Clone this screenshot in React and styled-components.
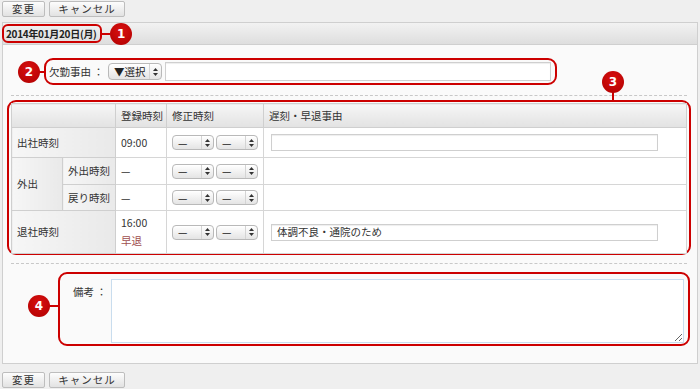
import React from "react";
import styled, { createGlobalStyle } from "styled-components";

const GlobalStyle = createGlobalStyle`
    body {
        margin: 0;
        background: #efefef;
        font-family: "Noto Sans CJK JP", "Liberation Sans", sans-serif;
        font-size: 10.5px;
        line-height: 14px;
        color: #333;
    }
`;

const Page = styled.div`
    width: 700px;
    height: 389px;
    overflow: hidden;
    white-space: nowrap;
`;

const ButtonBar = styled.div`
    display: flex;
    gap: 4px;
    padding: ${(p) => (p.bottom ? "8px 2px 0" : "1px 2px 0")};
`;

const Button = styled.button`
    width: ${(p) => p.w}px;
    height: 16px;
    padding: 0;
    border: 1px solid #bdbdbd;
    border-radius: 2px;
    background: linear-gradient(#fdfdfd, #e2e2e2);
    font-family: inherit;
    font-size: 10.5px;
    line-height: 14px;
    color: #333;
    letter-spacing: 1px;
`;

const Panel = styled.div`
    margin: 5px 2px 0;
    border: 1px solid #cfcfcf;
    background: #fafafa;
`;

const PanelHeader = styled.div`
    height: 21px;
    display: flex;
    align-items: center;
    background: linear-gradient(#f2f2f2, #dedede);
    border-bottom: 1px solid #cfcfcf;
`;

const Callout = styled.div`
    position: relative;
    border: 2px solid #cc0000;
    border-radius: ${(p) => p.r || 9}px;
    box-sizing: border-box;
`;

const DateBox = styled(Callout)`
    width: 100px;
    height: 19px;
    margin-left: -1px;
    display: flex;
    align-items: center;
    padding-left: 2px;
    font-weight: bold;
    font-size: 10px;
    color: #222;
    letter-spacing: -0.3px;
`;

const Badge = styled.div`
    position: absolute;
    top: ${(p) => p.top}px;
    left: ${(p) => p.left}px;
    width: 22px;
    height: 22px;
    border-radius: 50%;
    background: radial-gradient(circle at 50% 35%, #d81010, #b00000);
    color: #fff;
    font-family: "DejaVu Sans", sans-serif;
    font-weight: bold;
    font-size: 12px;
    display: flex;
    align-items: center;
    justify-content: center;
    z-index: 2;
`;

const Connector = styled.div`
    position: absolute;
    top: ${(p) => p.top}px;
    left: ${(p) => p.left}px;
    width: ${(p) => p.w || 2}px;
    height: ${(p) => p.h || 2}px;
    background: #cc0000;
`;

const PanelBody = styled.div`
    padding: 13px 0 17px;
`;

const ReasonBox = styled(Callout)`
    margin-left: 41px;
    width: 513px;
    height: 27px;
    display: flex;
    align-items: center;
    padding-left: 3px;
    gap: 3px;
`;

const FieldLabel = styled.span`
    white-space: nowrap;
    width: ${(p) => p.w}px;
`;

const SelectBox = styled.div`
    display: inline-flex;
    align-items: center;
    box-sizing: border-box;
    width: ${(p) => p.w || 42}px;
    height: ${(p) => p.h || 15}px;
    padding-left: 5px;
    border: 1px solid #b9b9b9;
    border-radius: 4px;
    background: linear-gradient(#ffffff, #e4e4e4);
    box-shadow: inset 0 1px 0 #fff;
    font-size: 10.5px;
    color: #222;
    position: relative;
`;

const SelectText = styled.span`
    flex: 1;
`;

const SelectArrows = styled.span`
    width: 11px;
    height: 100%;
    display: flex;
    align-items: center;
    justify-content: center;
    border-left: 1px solid #d4d4d4;
`;

const TextInput = styled.div`
    box-sizing: border-box;
    width: ${(p) => p.w}px;
    height: ${(p) => p.h || 18}px;
    border: 1px solid #cfcfcf;
    background: #fff;
    box-shadow: inset 0 1px 1px #eee;
    padding-left: 5px;
    display: flex;
    align-items: center;
    color: #333;
`;

const Dashed = styled.div`
    margin: ${(p) => p.m};
    border-top: 1px dashed #c8c8c8;
`;

const TableBox = styled(Callout)`
    margin: 0 6px 0 4px;
    padding: 1px 1px 0 2px;
    height: 155px;
`;

const Table = styled.table`
    width: 676px;
    border-collapse: collapse;
    table-layout: fixed;
    background: #fff;
`;

const Tr = styled.tr`
    height: ${(p) => p.h}px;
`;

const Th = styled.th`
    padding: 0 0 0 5px;
    text-align: left;
    font-weight: normal;
    background: linear-gradient(#f6f6f6, #e2e2e2);
    border: 1px solid #cfcfcf;
`;

const LabelCell = styled.td`
    padding: 0 0 0 5px;
    background: linear-gradient(to right, #f6f6f6, #e9e9e9);
    border: 1px solid #cfcfcf;
`;

const Td = styled.td`
    padding: 0 0 0 ${(p) => p.pl || 5}px;
    border: 1px solid #d6d6d6;
    vertical-align: middle;
`;

const SelectPair = styled.div`
    display: flex;
    gap: 2px;
`;

const Early = styled.div`
    color: #a05050;
    margin-top: 4px;
`;

const NoteBox = styled(Callout)`
    margin-left: 55px;
    width: 632px;
    height: 74px;
    display: flex;
    align-items: flex-start;
    padding: 5px 0 0 13px;
    gap: 4px;
`;

const NoteLabel = styled(FieldLabel)`
    margin-top: 6px;
`;

const TextArea = styled.textarea`
    box-sizing: border-box;
    width: 573px;
    height: 64px;
    border: 1px solid #c9ddee;
    background: #fff;
    resize: both;
    margin: 0;
    font-family: inherit;
    outline: none;
`;

const Arrows = () => (
    <svg width="5" height="8" viewBox="0 0 5 8">
        <path d="M2.5 0 L5 3 L0 3 Z" fill="#333" />
        <path d="M2.5 8 L5 5 L0 5 Z" fill="#333" />
    </svg>
);

const Select = ({ text = "—", w, h }) => (
    <SelectBox w={w} h={h}>
        <SelectText>{text}</SelectText>
        <SelectArrows>
            <Arrows />
        </SelectArrows>
    </SelectBox>
);

const TimeSelects = () => (
    <SelectPair>
        <Select />
        <Select />
    </SelectPair>
);

const App = () => {
    return (
        <Page>
            <GlobalStyle />
            <ButtonBar>
                <Button w={43}>変更</Button>
                <Button w={76}>キャンセル</Button>
            </ButtonBar>

            <Panel>
                <PanelHeader>
                    <DateBox r={6}>
                        2014年01月20日(月)
                        <Connector left={98} top={7} w={8} />
                        <Badge left={106} top={-3}>1</Badge>
                    </DateBox>
                </PanelHeader>

                <PanelBody>
                    <ReasonBox>
                        <Connector left={-7} top={11} w={6} />
                        <Badge left={-28} top={1}>2</Badge>
                        <FieldLabel w={56}>欠勤事由 ：</FieldLabel>
                        <Select text="▼選択" w={54} h={17} />
                        <TextInput w={386} h={19} />
                    </ReasonBox>

                    <Dashed m="10px 10px 4px 8px" />

                    <TableBox>
                        <Connector left={603} top={-11} w={2} h={10} />
                        <Badge left={593} top={-31}>3</Badge>
                        <Table>
                            <colgroup>
                                <col style={{ width: 51 }} />
                                <col style={{ width: 53 }} />
                                <col style={{ width: 51 }} />
                                <col style={{ width: 97 }} />
                                <col />
                            </colgroup>
                            <thead>
                                <Tr h={24}>
                                    <Th colSpan={2} />
                                    <Th>登録時刻</Th>
                                    <Th>修正時刻</Th>
                                    <Th>遅刻・早退事由</Th>
                                </Tr>
                            </thead>
                            <tbody>
                                <Tr h={30}>
                                    <LabelCell colSpan={2}>出社時刻</LabelCell>
                                    <Td>09:00</Td>
                                    <Td><TimeSelects /></Td>
                                    <Td pl={7}><TextInput w={387} h={17} /></Td>
                                </Tr>
                                <Tr h={27}>
                                    <LabelCell rowSpan={2}>外出</LabelCell>
                                    <LabelCell>外出時刻</LabelCell>
                                    <Td>—</Td>
                                    <Td><TimeSelects /></Td>
                                    <Td />
                                </Tr>
                                <Tr h={26}>
                                    <LabelCell>戻り時刻</LabelCell>
                                    <Td>—</Td>
                                    <Td><TimeSelects /></Td>
                                    <Td />
                                </Tr>
                                <Tr h={43}>
                                    <LabelCell colSpan={2}>退社時刻</LabelCell>
                                    <Td>
                                        16:00
                                        <Early>早退</Early>
                                    </Td>
                                    <Td><TimeSelects /></Td>
                                    <Td pl={7}>
                                        <TextInput w={387} h={17}>体調不良・通院のため</TextInput>
                                    </Td>
                                </Tr>
                            </tbody>
                        </Table>
                    </TableBox>

                    <Dashed m="8px 10px 8px 8px" />

                    <NoteBox>
                        <Connector left={-11} top={31} w={10} />
                        <Badge left={-32} top={21}>4</Badge>
                        <NoteLabel>備考 ：</NoteLabel>
                        <TextArea />
                    </NoteBox>
                </PanelBody>
            </Panel>

            <ButtonBar bottom>
                <Button w={43}>変更</Button>
                <Button w={76}>キャンセル</Button>
            </ButtonBar>
        </Page>
    );
};

export default App;
